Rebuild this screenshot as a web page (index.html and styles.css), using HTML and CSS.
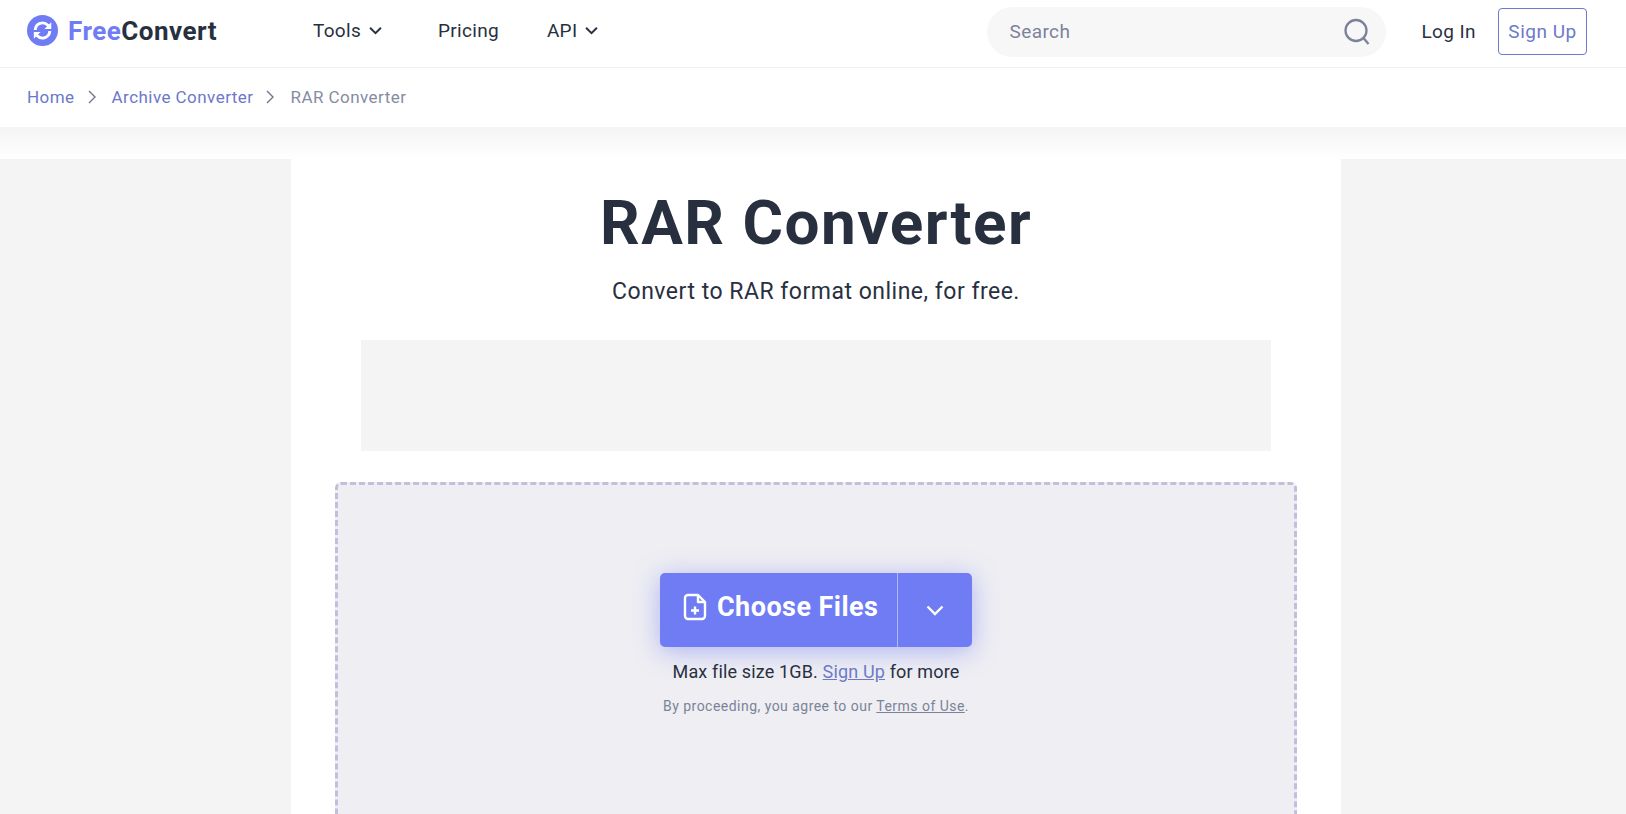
FILE: index.html
```html
<!DOCTYPE html>
<html lang="en">
<head>
    <meta charset="UTF-8">
    <meta name="viewport" content="width=device-width, initial-scale=1.0">
    <title>RAR Converter</title>
    <link rel="stylesheet" href="styles.css">
</head>
<body>
    <header class="topbar">
        <a class="logo" href="#">
            <svg class="logo-icon" viewBox="0 0 32 32">
                <circle cx="16" cy="16" r="16" fill="#6f7cf4"/>
                <path d="M8.500 15.500a7.600 7.600 0 0 1 13-5l1.500 1.500" fill="none" stroke="#fff" stroke-width="3"/>
                <path d="M25 7.500v7h-7z" fill="#fff"/>
                <path d="M23.500 16.500a7.600 7.600 0 0 1-13 5l-1.500-1.500" fill="none" stroke="#fff" stroke-width="3"/>
                <path d="M7 24.500v-7h7z" fill="#fff"/>
            </svg>
            <span class="logo-free">Free</span><span class="logo-convert">Convert</span>
        </a>
        <nav class="nav">
            <a href="#" class="nav-tools">Tools
                <svg class="chev" viewBox="0 0 12 8"><path d="M1 1.500l5 5 5-5"/></svg>
            </a>
            <a href="#" class="nav-pricing">Pricing</a>
            <a href="#" class="nav-api">API
                <svg class="chev" viewBox="0 0 12 8"><path d="M1 1.500l5 5 5-5"/></svg>
            </a>
        </nav>
        <div class="search">
            <span>Search</span>
            <svg class="search-icon" viewBox="0 0 28 28">
                <circle cx="13" cy="12.500" r="10.500"/>
                <path d="M20.500 20l5 6"/>
            </svg>
        </div>
        <a href="#" class="login">Log In</a>
        <a href="#" class="signup">Sign Up</a>
    </header>

    <div class="breadcrumb">
        <a href="#">Home</a>
        <svg class="crumb-sep" viewBox="0 0 8 14"><path d="M1 1l6 6-6 6"/></svg>
        <a href="#">Archive Converter</a>
        <svg class="crumb-sep" viewBox="0 0 8 14"><path d="M1 1l6 6-6 6"/></svg>
        <span>RAR Converter</span>
    </div>
    <div class="shade"></div>

    <main class="content">
        <h1>RAR Converter</h1>
        <p class="subtitle">Convert to RAR format online, for free.</p>
        <div class="ad"></div>
        <section class="dropzone">
            <div class="upload-btn">
                <div class="upload-main">
                    <svg class="file-icon" viewBox="0 0 24 28">
                        <path d="M15 2H5a3 3 0 0 0-3 3v18a3 3 0 0 0 3 3h14a3 3 0 0 0 3-3V9z"/>
                        <path d="M15 2v7h7"/>
                        <path d="M12 13.500v8M8 17.500h8"/>
                    </svg>
                    Choose Files
                </div>
                <div class="upload-more">
                    <svg class="more-chev" viewBox="0 0 18 11"><path d="M1.500 1.500L9 9l7.500-7.500"/></svg>
                </div>
            </div>
            <p class="limit">Max file size 1GB. <a href="#">Sign Up</a> for more</p>
            <p class="terms">By proceeding, you agree to our <a href="#">Terms of Use</a>.</p>
        </section>
    </main>
</body>
</html>
```

FILE: styles.css
```css
* {
    box-sizing: border-box;
}

body {
    margin: 0;
    font-family: Roboto, Arial, sans-serif;
    background-color: #f4f4f4;
    color: #28303f;
}

a {
    text-decoration: none;
    color: inherit;
}

.topbar {
    display: flex;
    align-items: center;
    height: 68px;
    padding: 0 39px 4px 27px;
    background: white;
    border-bottom: 1px solid #f0f0f0;
}

.logo {
    display: flex;
    align-items: center;
    width: 286px;
    margin-bottom: 2px;
    font-size: 26px;
    font-weight: 700;
    letter-spacing: 0.5px;
}

.logo-icon {
    width: 31px;
    height: 31px;
    margin-right: 10px;
}

.logo-free {
    color: #6f7cf4;
}

.nav {
    display: flex;
    align-items: center;
    flex: 1;
    margin-bottom: 2px;
    font-size: 19px;
    letter-spacing: 0.3px;
}

.nav a {
    display: flex;
    align-items: center;
}

.nav-pricing {
    margin: 0 48px 0 56px;
}

.chev {
    width: 13px;
    height: 9px;
    margin-left: 8px;
    fill: none;
    stroke: #28303f;
    stroke-width: 1.8;
}

.search {
    display: flex;
    align-items: center;
    justify-content: space-between;
    width: 399px;
    height: 50px;
    padding: 0 15px 0 22px;
    background: #f7f7f8;
    border-radius: 25px;
    font-size: 19px;
    letter-spacing: 0.4px;
    color: #7b8398;
}

.search-icon {
    width: 28px;
    height: 28px;
    fill: none;
    stroke: #7b8398;
    stroke-width: 2.3;
}

.login {
    margin: 0 22px 0 35px;
    font-size: 19px;
    letter-spacing: 0.4px;
}

.signup {
    display: flex;
    align-items: center;
    justify-content: center;
    width: 89px;
    height: 47px;
    border: 1px solid #6c7ac8;
    border-radius: 4px;
    font-size: 19px;
    letter-spacing: 0.5px;
    color: #6c7ac8;
}

.breadcrumb {
    display: flex;
    align-items: center;
    height: 59px;
    padding: 0 27px 2px;
    background: white;
    font-size: 17px;
    letter-spacing: 0.45px;
    color: #858ca3;
}

.breadcrumb a {
    color: #6c78c8;
}

.crumb-sep {
    width: 8px;
    height: 14px;
    margin: 0 16px 0 13px;
    fill: none;
    stroke: #70768a;
    stroke-width: 1.4;
}

.shade {
    height: 32px;
    background: linear-gradient(#f4f4f4, white);
}

.content {
    width: 1050px;
    height: 655px;
    margin-left: 291px;
    padding-top: 26px;
    overflow: hidden;
    background: white;
    text-align: center;
}

h1 {
    margin: 0;
    font-size: 62px;
    line-height: 76px;
    font-weight: 700;
    letter-spacing: 1.5px;
    color: #28303f;
}

.subtitle {
    margin: 16px 0 0;
    font-size: 23px;
    line-height: 30px;
    letter-spacing: 0.5px;
}

.ad {
    width: 910px;
    height: 111px;
    margin: 33px auto 0;
    background: #f4f4f4;
}

.dropzone {
    display: flex;
    flex-direction: column;
    align-items: center;
    width: 962px;
    height: 345px;
    margin: 31px auto 0;
    padding-top: 88px;
    background: #eeeef3;
    border: 3px dashed #c1c0dc;
    border-radius: 6px;
}

.upload-btn {
    display: flex;
    width: 312px;
    height: 74px;
    background: #6f7cf4;
    border-radius: 5px;
    box-shadow: 0 4px 24px rgba(111, 124, 244, 0.5);
    color: white;
}

.upload-main {
    display: flex;
    align-items: center;
    width: 238px;
    padding: 0 0 6px 23px;
    font-size: 27px;
    font-weight: 700;
    letter-spacing: 0.45px;
    border-right: 1px solid #b0b8f8;
}

.file-icon {
    width: 24px;
    height: 28px;
    margin-right: 10px;
    fill: none;
    stroke: white;
    stroke-width: 2.4;
    stroke-linejoin: round;
}

.upload-more {
    flex: 1;
    display: flex;
    align-items: center;
    justify-content: center;
}

.more-chev {
    width: 18px;
    height: 11px;
    fill: none;
    stroke: white;
    stroke-width: 2.4;
}

.limit {
    margin: 12px 0 0;
    font-size: 18px;
    line-height: 26px;
    letter-spacing: 0.15px;
}

.limit a {
    color: #6c7ac8;
    text-decoration: underline;
}

.terms {
    margin: 11px 0 0;
    font-size: 14px;
    line-height: 20px;
    letter-spacing: 0.47px;
    color: #7b8398;
}

.terms a {
    text-decoration: underline;
}
```
